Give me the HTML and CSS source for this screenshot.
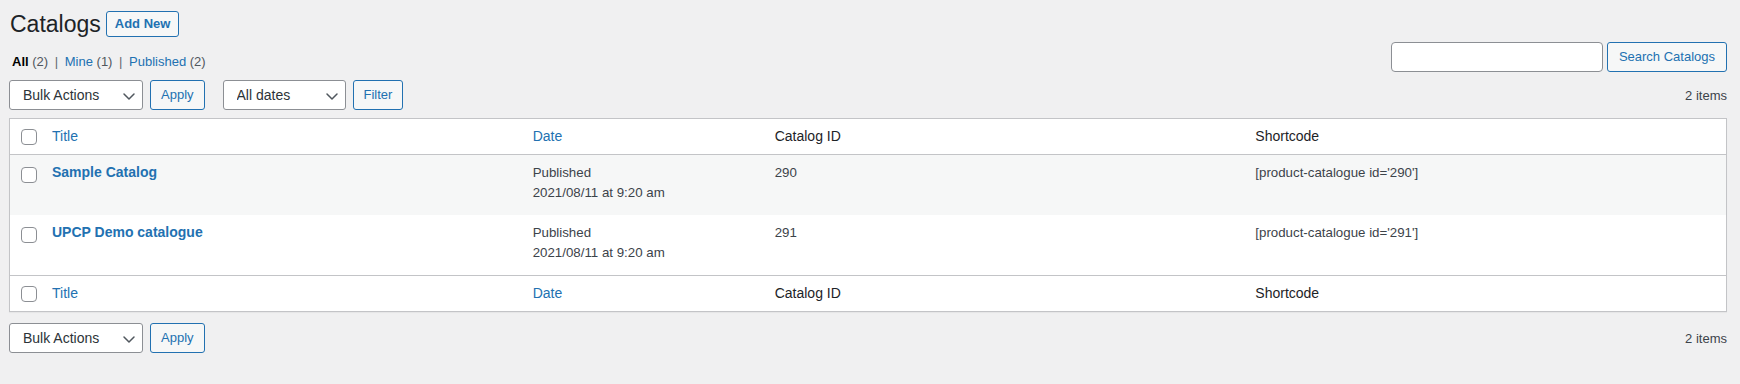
FILE: index.html
```html
<!DOCTYPE html>
<html lang="en">
<head>
<meta charset="utf-8">
<title>Catalogs</title>
<link rel="stylesheet" href="styles.css">
</head>
<body>
<div class="wrap">
  <div class="page-head">
    <h1 class="page-title">Catalogs</h1>
    <a class="page-title-action" href="#">Add New</a>
  </div>

  <div class="filter-row">
    <ul class="subsubsub">
      <li><a class="current" href="#">All <span class="count">(2)</span></a> |</li>
      <li><a href="#">Mine <span class="count">(1)</span></a> |</li>
      <li><a href="#">Published <span class="count">(2)</span></a></li>
    </ul>
    <div class="search-box">
      <input class="search-input" type="search" aria-label="Search Catalogs">
      <button class="button" type="button">Search Catalogs</button>
    </div>
  </div>

  <div class="tablenav tablenav-top">
    <div class="actions">
      <span class="select-wrap select-bulk">
        <select class="select"><option>Bulk Actions</option></select>
        <svg class="chevron" width="16" height="16" viewBox="0 0 16 16"><polyline points="3,6 8,11 13,6" fill="none" stroke="#50575e" stroke-width="1.5" stroke-linecap="round" stroke-linejoin="round"/></svg>
      </span>
      <button class="button" type="button">Apply</button>
    </div>
    <div class="actions">
      <span class="select-wrap select-dates">
        <select class="select"><option>All dates</option></select>
        <svg class="chevron" width="16" height="16" viewBox="0 0 16 16"><polyline points="3,6 8,11 13,6" fill="none" stroke="#50575e" stroke-width="1.5" stroke-linecap="round" stroke-linejoin="round"/></svg>
      </span>
      <button class="button" type="button">Filter</button>
    </div>
    <div class="displaying-num">2 items</div>
  </div>

  <table class="list-table">
    <colgroup>
      <col class="col-check">
      <col>
      <col class="col-date">
      <col>
      <col>
    </colgroup>
    <thead>
      <tr>
        <th class="check-column"><input class="checkbox" type="checkbox" aria-label="Select all"></th>
        <th><a class="sort-link" href="#">Title</a></th>
        <th><a class="sort-link" href="#">Date</a></th>
        <th>Catalog ID</th>
        <th>Shortcode</th>
      </tr>
    </thead>
    <tbody>
      <tr class="alt">
        <td class="check-column"><input class="checkbox" type="checkbox" aria-label="Select Sample Catalog"></td>
        <td><a class="row-title" href="#">Sample Catalog</a></td>
        <td>Published<br>2021/08/11 at 9:20 am</td>
        <td>290</td>
        <td>[product-catalogue id='290']</td>
      </tr>
      <tr>
        <td class="check-column"><input class="checkbox" type="checkbox" aria-label="Select UPCP Demo catalogue"></td>
        <td><a class="row-title" href="#">UPCP Demo catalogue</a></td>
        <td>Published<br>2021/08/11 at 9:20 am</td>
        <td>291</td>
        <td>[product-catalogue id='291']</td>
      </tr>
    </tbody>
    <tfoot>
      <tr>
        <th class="check-column"><input class="checkbox" type="checkbox" aria-label="Select all"></th>
        <th><a class="sort-link" href="#">Title</a></th>
        <th><a class="sort-link" href="#">Date</a></th>
        <th>Catalog ID</th>
        <th>Shortcode</th>
      </tr>
    </tfoot>
  </table>

  <div class="tablenav tablenav-bottom">
    <div class="actions">
      <span class="select-wrap select-bulk">
        <select class="select"><option>Bulk Actions</option></select>
        <svg class="chevron" width="16" height="16" viewBox="0 0 16 16"><polyline points="3,6 8,11 13,6" fill="none" stroke="#50575e" stroke-width="1.5" stroke-linecap="round" stroke-linejoin="round"/></svg>
      </span>
      <button class="button" type="button">Apply</button>
    </div>
    <div class="displaying-num">2 items</div>
  </div>
</div>
</body>
</html>
```

FILE: styles.css
```css
* {
  box-sizing: border-box;
}

html, body {
  margin: 0;
  padding: 0;
  background: #f0f0f1;
}

body {
  font-family: "Liberation Sans", Arial, sans-serif;
  font-size: 13px;
  color: #3c434a;
}

a {
  color: #2271b1;
  text-decoration: none;
}

.wrap {
  padding: 0 13px 0 9px;
}

/* Header */
.page-head {
  display: flex;
  align-items: center;
  padding-top: 9px;
}

.page-title {
  margin: 0 5px 0 1px;
  font-size: 23px;
  font-weight: 400;
  line-height: 30px;
  color: #1d2327;
}

.page-title-action {
  display: inline-block;
  padding: 4px 8px;
  border: 1px solid #2271b1;
  border-radius: 3px;
  background: #f6f7f7;
  color: #2271b1;
  font-size: 13px;
  font-weight: 700;
  line-height: 16px;
}

/* Views + search */
.filter-row {
  display: flex;
  justify-content: space-between;
  align-items: flex-start;
  margin-top: 3px;
}

.subsubsub {
  list-style: none;
  margin: 7px 0 0;
  padding: 0;
  font-size: 13px;
  line-height: 26px;
  color: #646970;
  white-space: nowrap;
}

.subsubsub li {
  display: inline;
}

.subsubsub a {
  padding: 0 3px;
}

.subsubsub a.current {
  color: #000;
  font-weight: 700;
}

.subsubsub .count {
  color: #50575e;
  font-weight: 400;
}

.search-box {
  display: flex;
  gap: 4px;
}

.search-input {
  width: 212px;
  height: 30px;
  margin: 0;
  border: 1px solid #8c8f94;
  border-radius: 4px;
  background: #fff;
  font-family: inherit;
  font-size: 14px;
}

.button {
  height: 30px;
  margin: 0;
  padding: 0 10px;
  border: 1px solid #2271b1;
  border-radius: 3px;
  background: #f6f7f7;
  color: #2271b1;
  font-family: inherit;
  font-size: 13px;
  line-height: 28px;
  cursor: pointer;
}

.search-box .button {
  padding: 0 11px;
}

/* Tablenav */
.tablenav {
  display: flex;
  align-items: center;
  height: 30px;
}

.tablenav-top {
  margin-top: 5px;
  margin-bottom: 8px;
}

.tablenav-bottom {
  margin-top: 11px;
}

.actions {
  display: flex;
  align-items: center;
  gap: 7px;
  margin-right: 18px;
}

.select-wrap {
  position: relative;
  display: inline-block;
  height: 30px;
}

.select-bulk {
  width: 134px;
}

.select-dates {
  width: 123px;
}

.select {
  -webkit-appearance: none;
  appearance: none;
  width: 100%;
  height: 30px;
  margin: 0;
  padding: 0 24px 0 13px;
  border: 1px solid #8c8f94;
  border-radius: 3px;
  background: #fff;
  color: #2c3338;
  font-family: inherit;
  font-size: 14px;
  line-height: 28px;
}

.chevron {
  position: absolute;
  right: 6px;
  top: 8px;
  pointer-events: none;
}

.displaying-num {
  margin-left: auto;
  color: #3c434a;
  font-size: 13px;
}

/* Table */
.list-table {
  width: 100%;
  table-layout: fixed;
  border-spacing: 0;
  border: 1px solid #c3c4c7;
  box-shadow: 0 1px 1px rgba(0, 0, 0, 0.04);
  background: #fff;
}

.col-check {
  width: 32px;
}

.col-date {
  width: 242px;
}

.list-table th {
  padding: 8px 10px;
  text-align: left;
  font-weight: 400;
  font-size: 14px;
  line-height: 19px;
  color: #1d2327;
  vertical-align: middle;
}

.list-table thead th {
  border-bottom: 1px solid #c3c4c7;
}

.list-table tfoot th {
  border-top: 1px solid #c3c4c7;
}

.list-table tbody tr {
  height: 60px;
}

.list-table tbody tr.alt {
  background: #f6f7f7;
}

.list-table td {
  padding: 8px 10px;
  vertical-align: top;
  font-size: 13.3px;
  line-height: 19.5px;
  color: #3c434a;
}

.list-table .check-column {
  padding: 0 0 0 11px;
}

.list-table td.check-column {
  padding-top: 12px;
}

.checkbox {
  -webkit-appearance: none;
  appearance: none;
  display: block;
  width: 16px;
  height: 16px;
  margin: 0;
  border: 1px solid #8c8f94;
  border-radius: 4px;
  background: #fff;
}

.row-title {
  font-size: 14px;
  font-weight: 700;
  line-height: 19.6px;
}
```
